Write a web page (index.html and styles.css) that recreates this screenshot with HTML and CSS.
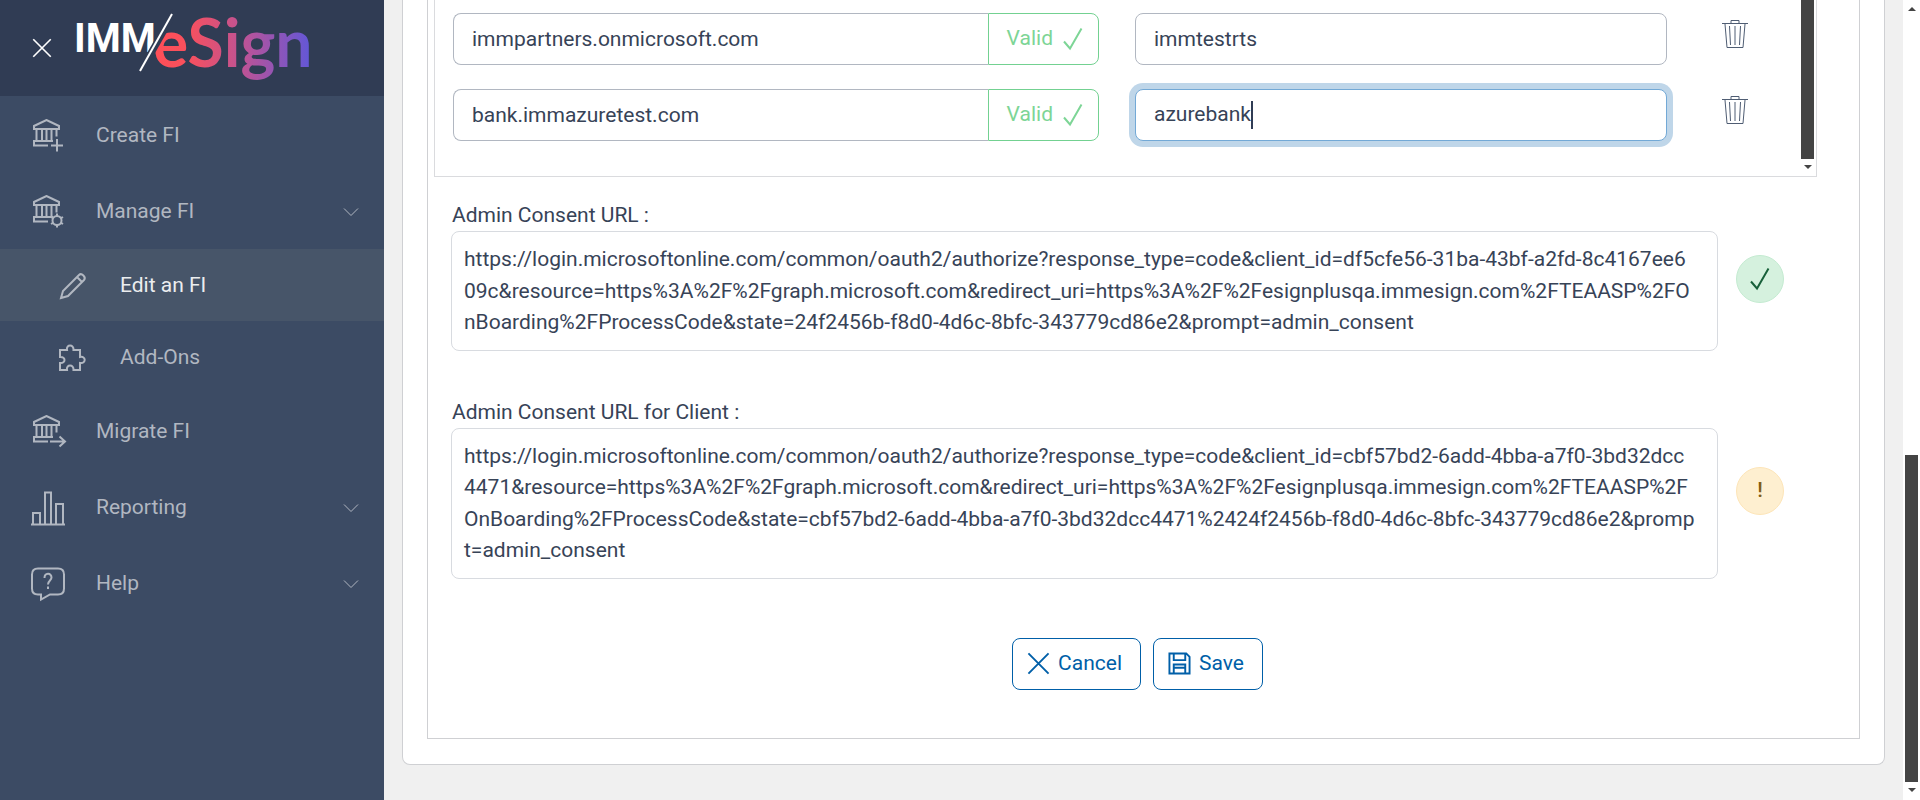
FILE: index.html
```html
<!DOCTYPE html>
<html lang="en">
<head>
<meta charset="utf-8">
<title>IMM eSign - Edit an FI</title>
<link rel="stylesheet" href="styles.css">
</head>
<body>
<svg class="defs" aria-hidden="true">
  <symbol id="bank" viewBox="0 0 34 34">
    <path d="M3 10V7L15.500 1L28 7V10ZM5.500 10V21.500M11 10V21.500M15.500 10V21.500M20.500 10V21.500M25.500 10V17.500M3 22H22M3 21V26.500H17"/>
  </symbol>
  <symbol id="chevron" viewBox="0 0 16 10"><path d="M1 1.500L8 8.500L15 1.500"/></symbol>
  <symbol id="check" viewBox="0 0 20 24"><path d="M1 14.500L7 21.500L18.500 1.500"/></symbol>
  <symbol id="cross" viewBox="0 0 24 24"><path d="M1.500 1.500L22.500 22.500M22.500 1.500L1.500 22.500"/></symbol>
  <symbol id="trash" viewBox="0 0 26 30">
    <path d="M0 4.500H26M9 4V1.500H17V4M3 5L5 28.500H21L23 5M7.500 7L8.500 26M13 7V26M18.500 7L17.500 26"/>
  </symbol>
</svg>
<div class="app">
  <aside class="sidebar">
    <header class="brand">
      <button class="close" type="button" aria-label="Close menu"><svg class="icon-close"><use href="#cross"/></svg></button>
      <svg class="logo" viewBox="0 0 236 76" role="img" aria-label="IMM eSign">
        <defs>
          <linearGradient id="sunset" gradientUnits="userSpaceOnUse" x1="80" y1="0" x2="232" y2="0">
            <stop offset="0" stop-color="#ff4f58"/><stop offset=".2" stop-color="#f9505d"/>
            <stop offset=".6" stop-color="#b7539a"/><stop offset="1" stop-color="#6457d6"/>
          </linearGradient>
        </defs>
        <text class="logo-imm" x="-3" y="42">IMM</text>
        <text class="logo-esign" x="76" y="57" fill="url(#sunset)">eSign</text>
        <path class="logo-gap" d="M62 64L98 1"/>
        <path class="logo-slash" d="M63 61L95 4"/>
      </svg>
    </header>
    <nav class="nav">
      <a class="item" href="#create"><svg class="icon" viewBox="0 0 34 34"><use href="#bank"/><path d="M26 20V32.500M20 26.500H32"/></svg><span>Create FI</span></a>
      <a class="item" href="#manage"><svg class="icon" viewBox="0 0 34 34"><use href="#bank"/><circle cx="26" cy="25.500" r="4.500"/><path d="M26 18.500V21M26 30V32.500M20 22L22.100 23.200M29.900 27.800L32 29M20 29L22.100 27.800M29.900 23.200L32 22"/></svg><span>Manage FI</span><svg class="chevron"><use href="#chevron"/></svg></a>
      <a class="item sub active" href="#edit"><svg class="icon" viewBox="2 3 28 28"><path d="M4 29L6 22L22 6C24.500 3.500 29.500 8 27 11L11 27ZM20 8L25 13"/></svg><span>Edit an FI</span></a>
      <a class="item sub" href="#addons"><svg class="icon" viewBox="2 2 28 28"><path d="M3 8H10C9 2 17 2 16.500 8H23V15C29 13.500 29.500 22 23 21V28H16.500C17 22 9 22 10 28H3V21C9 21.500 9 14.500 3 15Z"/></svg><span>Add-Ons</span></a>
      <a class="item" href="#migrate"><svg class="icon" viewBox="0 0 34 34"><use href="#bank"/><path d="M19 26.500H34M28.500 21.500L34 26.500L28.500 31.500"/></svg><span>Migrate FI</span></a>
      <a class="item" href="#reporting"><svg class="icon" viewBox="0 0 34 34"><path d="M0 33.500H34M2 33V22H9V33M14 33V1.500H20V33M25 33V13H32V33"/></svg><span>Reporting</span><svg class="chevron"><use href="#chevron"/></svg></a>
      <a class="item" href="#help"><svg class="icon" viewBox="0 0 34 34"><path d="M7 1.500H27C31 1.500 33 4 33 7.500V21.500C33 25.500 31 27.500 27 27.500H19L10 32.500V27.500H7C3 27.500 1 25.500 1 21.500V7.500C1 4 3 1.500 7 1.500Z"/><path d="M13.500 11C13.500 5.500 20.500 5.500 20.500 10.500C20.500 13.500 17 13.500 17 17.500M17 19.500V22"/></svg><span>Help</span><svg class="chevron"><use href="#chevron"/></svg></a>
    </nav>
  </aside>
  <main class="main">
    <section class="card">
      <form class="panel">
        <div class="domains">
          <div class="rows">
            <div class="row">
              <div class="group"><input class="field" type="text" aria-label="Domain 1" value="immpartners.onmicrosoft.com"><button class="valid" type="button">Valid <svg class="icon-check"><use href="#check"/></svg></button></div>
              <input class="field tenant" type="text" aria-label="Tenant 1" value="immtestrts">
              <button class="trash" type="button" aria-label="Delete domain 1"><svg><use href="#trash"/></svg></button>
            </div>
            <div class="row">
              <div class="group"><input class="field" type="text" aria-label="Domain 2" value="bank.immazuretest.com"><button class="valid" type="button">Valid <svg class="icon-check"><use href="#check"/></svg></button></div>
              <div class="field tenant focused"><input class="bare" type="text" aria-label="Tenant 2" value="azurebank"><span class="caret"></span></div>
              <button class="trash" type="button" aria-label="Delete domain 2"><svg><use href="#trash"/></svg></button>
            </div>
          </div>
          <div class="bar"><span class="bar-thumb"></span><span class="arrow-down"></span></div>
        </div>
        <div class="consent">
          <h2 class="label">Admin Consent URL :</h2>
          <div class="consent-row">
            <p class="url">https://login.microsoftonline.com/common/oauth2/authorize?response_type=code&amp;client_id=df5cfe56-31ba-43bf-a2fd-8c4167ee6<br>09c&amp;resource=https%3A%2F%2Fgraph.microsoft.com&amp;redirect_uri=https%3A%2F%2Fesignplusqa.immesign.com%2FTEAASP%2FO<br>nBoarding%2FProcessCode&amp;state=24f2456b-f8d0-4d6c-8bfc-343779cd86e2&amp;prompt=admin_consent</p>
            <span class="status ok"><svg class="icon-check"><use href="#check"/></svg></span>
          </div>
        </div>
        <div class="consent">
          <h2 class="label">Admin Consent URL for Client :</h2>
          <div class="consent-row">
            <p class="url">https://login.microsoftonline.com/common/oauth2/authorize?response_type=code&amp;client_id=cbf57bd2-6add-4bba-a7f0-3bd32dcc<br>4471&amp;resource=https%3A%2F%2Fgraph.microsoft.com&amp;redirect_uri=https%3A%2F%2Fesignplusqa.immesign.com%2FTEAASP%2F<br>OnBoarding%2FProcessCode&amp;state=cbf57bd2-6add-4bba-a7f0-3bd32dcc4471%2424f2456b-f8d0-4d6c-8bfc-343779cd86e2&amp;promp<br>t=admin_consent</p>
            <span class="status warn">!</span>
          </div>
        </div>
        <div class="actions">
          <button class="btn" type="button"><svg class="btn-icon"><use href="#cross"/></svg>Cancel</button>
          <button class="btn" type="button"><svg class="btn-icon" viewBox="0 0 24 24"><path d="M1.500 1.500H19L22.500 5V22.500H1.500ZM6 1.500V8.500H18V1.500M6 22.500V13H18V22.500M6 16.500H18"/></svg>Save</button>
        </div>
      </form>
    </section>
  </main>
  <div class="page-bar"><span class="arrow-up"></span><span class="page-thumb"></span><span class="arrow-down"></span></div>
</div>
</body>
</html>
```
FILE: styles.css
```css
* { box-sizing: border-box; }
body { margin: 0; font-family: Roboto, "Liberation Sans", sans-serif; font-size: 21px; line-height: 1.5; color: #374357; background: #f0f0f0; }
button, input { font: inherit; color: inherit; }
button { cursor: pointer; }
svg { fill: none; stroke: currentColor; flex: none; }
.defs { position: absolute; width: 0; height: 0; }
.app { display: flex; height: 100vh; overflow: hidden; }

.sidebar { flex: none; width: 384px; background: #3c4b64; color: #b1b7c1; }
.brand { display: flex; align-items: flex-start; height: 96px; padding-left: 32px; background: #303c54; }
.close { align-self: center; height: 20px; padding: 0; border: 0; background: none; color: #fff; }
.icon-close { display: block; width: 20px; height: 20px; stroke-width: 2; }
.logo { width: 236px; height: 76px; margin: 10px 0 0 25px; overflow: visible; stroke: none; }
.logo-imm { font: 700 40px Roboto, sans-serif; fill: #fff; }
.logo-gap { stroke: #303c54; stroke-width: 7; }
.logo-slash { stroke: #fff; stroke-width: 2; }
.logo-esign { font: 700 66px Lato, sans-serif; }

.nav { display: flex; flex-direction: column; padding-top: 1px; }
.item { display: flex; align-items: center; gap: 31px; height: 76px; padding: 1px 25px 0 31px; color: inherit; text-decoration: none; }
.item .icon { width: 34px; height: 34px; stroke-width: 2; overflow: visible; }
.item.sub { height: 72px; padding-left: 59px; gap: 33px; }
.item.sub .icon { width: 28px; height: 28px; }
.item.active { background: #475569; color: #ebedef; }
.item.active .icon { color: #b1b7c1; }
.chevron { width: 16px; height: 10px; margin-left: auto; }

.main { flex: 1; min-width: 0; padding: 0 18px; }
.card { padding: 0 24px 25px; background: #fff; border: 1px solid #cfd0d3; border-top: 0; border-radius: 0 0 8px 8px; }
.panel { display: block; padding: 0 6px 48px; border: 1px solid #cfd0d3; border-top: 0; }

.domains { display: flex; margin-right: 36px; height: 177px; border: 1px solid #dadbde; border-top: 0; }
.rows { flex: 1; padding: 13px 51px 0 18px; }
.row { display: grid; grid-template-columns: 646px 1fr 26px; align-items: start; height: 76px; }
.group { display: flex; }
.field { flex: 1; min-width: 0; height: 52px; padding: 0 18px; border: 1px solid #b1b7c1; border-radius: 8px; background: #fff; outline: 0; }
.group .field { border-right: 0; border-radius: 8px 0 0 8px; }
.valid { display: flex; align-items: center; gap: 10px; height: 52px; padding: 0 15px 0 18px; border: 1px solid #73d191; border-radius: 0 8px 8px 0; background: #fff; color: #7dd596; }
.icon-check { width: 20px; height: 24px; stroke-width: 2; }
.tenant { margin: 0 55px 0 36px; }
.focused { display: flex; align-items: center; border-color: #73a9d6; box-shadow: 0 0 0 6px #bfd6e9; }
.bare { field-sizing: content; padding: 0; border: 0; outline: 0; background: none; }
.caret { width: 2px; height: 28px; background: #303c54; }
.trash { padding: 0; margin-top: 6px; border: 0; background: none; color: #4f5d73; }
.trash svg { display: block; width: 26px; height: 30px; }
.bar { display: flex; flex-direction: column; align-items: center; width: 17px; }
.bar-thumb { width: 13px; height: 159px; background: #444; }
.arrow-down, .arrow-up { border: 4px solid transparent; }
.arrow-down { margin-top: 6px; border-top-color: #444; border-bottom: 0; }
.arrow-up { border-bottom-color: #444; border-top: 0; }

.consent { padding: 23px 0 23px 17px; }
.label { margin: 0; font: inherit; line-height: 31px; padding-left: 1px; }
.consent-row { display: flex; align-items: center; gap: 18px; padding-right: 69px; }
.url { flex: 1; min-width: 0; margin: 0; padding: 12px 12px 11px; border: 1px solid #d8dbe0; border-radius: 8px; overflow-wrap: anywhere; }
.status { display: flex; align-items: center; justify-content: center; width: 48px; height: 48px; margin-bottom: 24px; border: 1px solid; border-radius: 50%; }
.ok { background: #d5f1de; border-color: #c4ebd1; color: #18603a; }
.warn { background: #feefd0; border-color: #fde5b8; color: #815c15; font-weight: 500; }

.actions { display: flex; justify-content: center; gap: 12px; padding: 36px 12px 0 0; }
.btn { display: flex; align-items: center; gap: 8px; height: 52px; padding: 0 18px 0 14px; border: 1px solid #005fa8; border-radius: 8px; background: #fff; color: #005fa8; }
.btn-icon { width: 23px; height: 23px; stroke-width: 2; }

.page-bar { display: flex; flex: none; flex-direction: column; align-items: center; width: 17px; padding: 7px 0 8px; background: #fff; }
.page-thumb { width: 13px; height: 327px; margin-top: auto; background: #444; }
```
